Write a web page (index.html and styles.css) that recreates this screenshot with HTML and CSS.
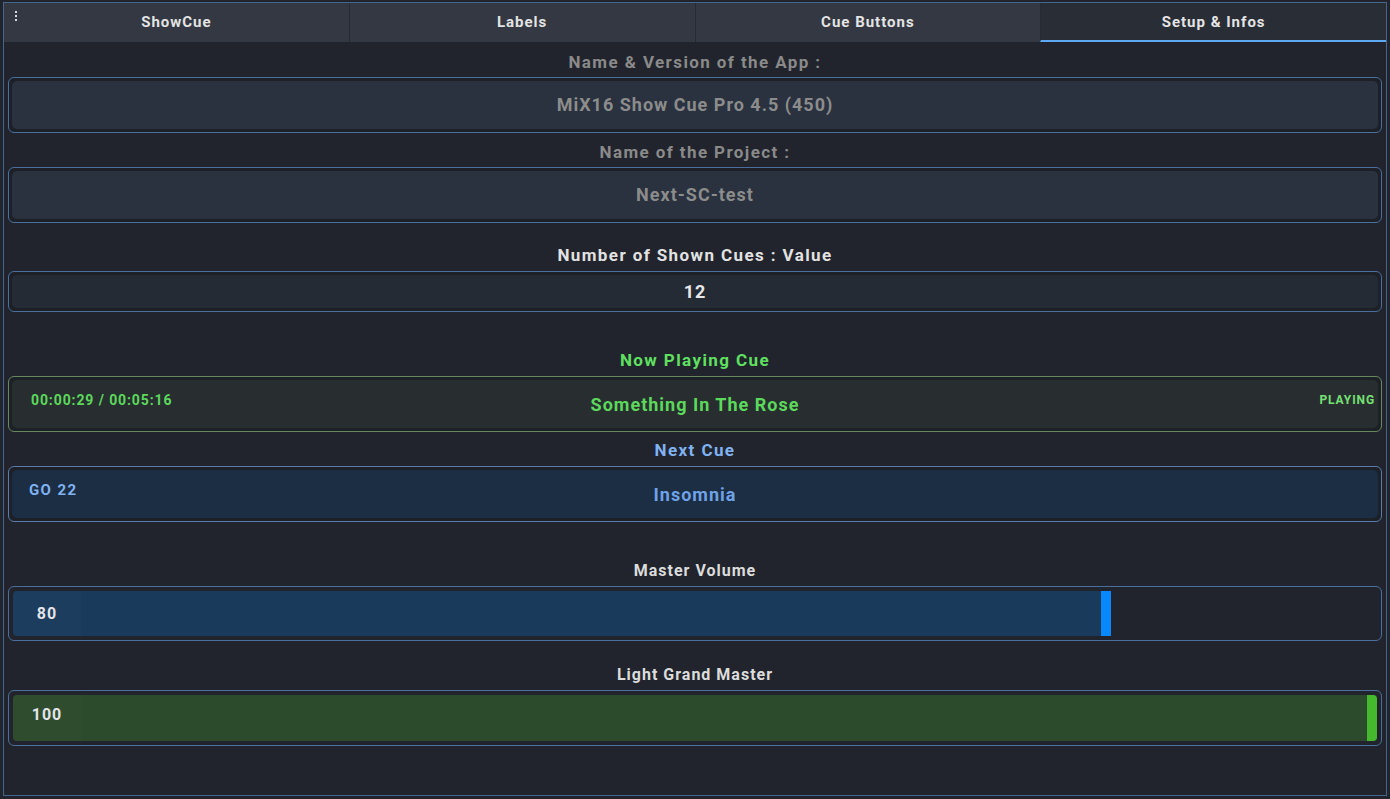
FILE: index.html
```html
<!DOCTYPE html>
<html lang="en">
<head>
<meta charset="utf-8">
<title>MiX16 Show Cue Pro</title>
<link rel="stylesheet" href="styles.css">
</head>
<body>
<div class="frame">
  <nav class="tabbar">
    <span class="menu-dots"><i></i><i></i><i></i></span>
    <div class="tab">ShowCue</div>
    <div class="tab">Labels</div>
    <div class="tab">Cue Buttons</div>
    <div class="tab tab-active">Setup &amp; Infos</div>
  </nav>
  <main class="content">
    <section class="sec sec-1">
      <div class="label label-grey">Name &amp; Version of the App :</div>
      <div class="box"><div class="box-inner inner-slate text-grey">MiX16 Show Cue Pro 4.5 (450)</div></div>
    </section>
    <section class="sec sec-2">
      <div class="label label-grey">Name of the Project :</div>
      <div class="box"><div class="box-inner inner-slate text-grey">Next-SC-test</div></div>
    </section>
    <section class="sec sec-3">
      <div class="label label-white">Number of Shown Cues : Value</div>
      <div class="box box-short"><div class="box-inner inner-dark text-white">12</div></div>
    </section>
    <section class="sec sec-4">
      <div class="label label-green">Now Playing Cue</div>
      <div class="box box-green">
        <div class="box-inner cue-inner inner-green">
          <span class="cue-left cue-time">00:00:29 / 00:05:16</span>
          <span class="cue-title title-green">Something In The Rose</span>
          <span class="cue-right cue-status">PLAYING</span>
        </div>
      </div>
    </section>
    <section class="sec sec-5">
      <div class="label label-blue">Next Cue</div>
      <div class="box box-blue">
        <div class="box-inner cue-inner inner-blue">
          <span class="cue-left cue-go">GO 22</span>
          <span class="cue-title title-blue">Insomnia</span>
          <span class="cue-right"></span>
        </div>
      </div>
    </section>
    <section class="sec sec-6">
      <div class="label label-light">Master Volume</div>
      <div class="box box-slider">
        <div class="track">
          <div class="fill fill-blue" style="width: 80.5%"></div>
          <span class="value">80</span>
        </div>
      </div>
    </section>
    <section class="sec sec-7">
      <div class="label label-light">Light Grand Master</div>
      <div class="box box-slider">
        <div class="track">
          <div class="fill fill-green" style="width: 100%"></div>
          <span class="value value-high">100</span>
        </div>
      </div>
    </section>
  </main>
</div>
</body>
</html>
```

FILE: styles.css
```css
* { box-sizing: border-box; }

html, body {
  margin: 0;
  padding: 0;
  background: #21242c;
}

body {
  font-family: Roboto, "Liberation Sans", Arial, sans-serif;
  font-weight: 700;
  width: 1390px;
  height: 799px;
  overflow: hidden;
}

.frame {
  width: 1384px;
  height: 794px;
  margin: 2px 0 0 3px;
  border: 1px solid #46658a;
  display: flex;
  flex-direction: column;
}

/* ---------- tabs ---------- */
.tabbar {
  position: relative;
  display: flex;
  height: 39px;
  background: #333842;
  flex: none;
}

.menu-dots {
  position: absolute;
  left: 11px;
  top: 8px;
  display: flex;
  flex-direction: column;
  gap: 2px;
}
.menu-dots i {
  display: block;
  width: 2px;
  height: 2px;
  background: #d8dbe0;
}

.tab {
  flex: 1;
  display: flex;
  align-items: center;
  justify-content: center;
  color: #e4e4e4;
  font-size: 15px;
  letter-spacing: 1px;
  border-left: 1px solid #262a31;
  padding-bottom: 2px;
}
.tab:first-of-type { border-left: none; }

.tab-active {
  background: #292d36;
  border-bottom: 2px solid #5aa9f2;
  padding-bottom: 0;
}

/* ---------- content ---------- */
.content {
  padding: 0 4px;
  display: flex;
  flex-direction: column;
}

.sec { display: flex; flex-direction: column; }
.sec-1 { margin-top: 9px; }
.sec-2 { margin-top: 8px; }
.sec-3 { margin-top: 21px; }
.sec-4 { margin-top: 37px; }
.sec-5 { margin-top: 7px; }
.sec-6 { margin-top: 37px; }
.sec-7 { margin-top: 22px; }

.label {
  height: 22px;
  line-height: 23px;
  text-align: center;
  font-size: 17px;
  letter-spacing: 1.4px;
  margin-bottom: 5px;
  white-space: nowrap;
}
.sec-1 .label, .sec-2 .label { margin-bottom: 4px; }

.label-grey { color: #8a8a8a; }
.label-white { color: #e2e2e2; }
.label-green { color: #5fe060; }
.label-blue { color: #80b2f2; }
.label-light { color: #dcdcdc; font-size: 16px; letter-spacing: 1px; line-height: 24px; }

.box {
  height: 56px;
  border: 1px solid #4a6f9c;
  border-radius: 6px;
  padding: 3px;
  background: #1d2027;
  display: flex;
}
.box-short { height: 41px; }
.box-green { border-color: #64885f; }
.box-blue { border-color: #5a7bab; }

.box-inner {
  flex: 1;
  border-radius: 5px;
  display: flex;
  align-items: center;
  justify-content: center;
  font-size: 18px;
  letter-spacing: 1px;
  padding-bottom: 1px;
}

.inner-slate { background: #29323e; }
.inner-dark { background: #252b35; }
.inner-green { background: #282e2f; }
.inner-blue { background: #1b2e44; }

.text-grey { color: #8c8c8c; }
.text-white { color: #e8e8e8; padding-bottom: 0; }

/* cue boxes */
.cue-inner {
  display: grid;
  grid-template-columns: 1fr auto 1fr;
  align-items: center;
}
.cue-title { font-size: 18px; letter-spacing: 1px; padding-top: 2px; }
.title-green { color: #5cd85c; }
.title-blue { color: #6fa2e6; }

.cue-left, .cue-right {
  align-self: start;
  white-space: nowrap;
}
.cue-left { justify-self: start; }
.cue-right { justify-self: end; }

.cue-time {
  color: #5cd85c;
  font-size: 14px;
  letter-spacing: 0.9px;
  padding: 12px 0 0 19px;
}
.cue-status {
  color: #74e074;
  font-size: 12px;
  letter-spacing: 0.9px;
  padding: 13px 3px 0 0;
}
.cue-go {
  color: #80b2f2;
  font-size: 15px;
  letter-spacing: 1.4px;
  padding: 11px 0 0 17px;
}

/* sliders */
.box-slider {
  height: 55px;
  padding: 4px;
  background: #21242c;
}
.sec-7 .box-slider { height: 56px; }

.track {
  flex: 1;
  display: flex;
  align-items: center;
  position: relative;
  border-radius: 4px;
}

.fill {
  position: absolute;
  left: 0;
  top: 0;
  bottom: 0;
  border-radius: 4px 0 0 4px;
}
.fill::after {
  content: "";
  position: absolute;
  right: 0;
  top: 0;
  bottom: 0;
  width: 10px;
}
.fill-blue { background: #1a3a5c; }
.fill-blue::after { background: #0888ff; }
.fill-green { background: #2c4a2c; border-radius: 4px; }
.fill-green::after { background: #45b92d; border-radius: 0 4px 4px 0; }

.value {
  position: relative;
  width: 68px;
  height: 100%;
  display: flex;
  align-items: center;
  justify-content: center;
  color: #e2e4e8;
  font-size: 16px;
  letter-spacing: 1px;
  background: rgba(255, 255, 255, 0.015);
  border-radius: 4px 0 0 4px;
}
.value-high { padding-bottom: 8px; }
```
